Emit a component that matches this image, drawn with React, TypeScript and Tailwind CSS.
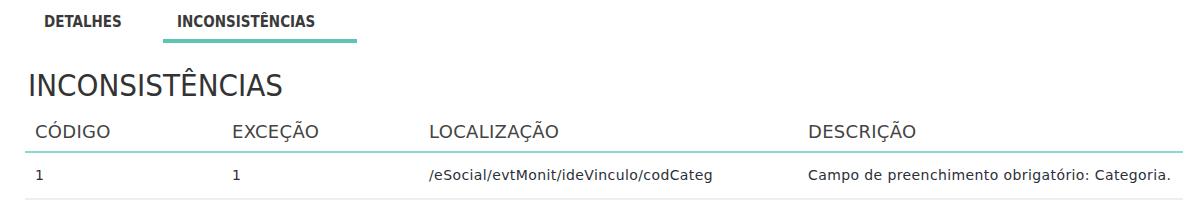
import React from "react";

const cond = { fontFamily: '"DejaVu Sans Condensed", "DejaVu Sans", sans-serif' };
const wide = { fontFamily: '"DejaVu Sans", sans-serif' };

export default function App() {
  return (
    <div className="w-[1187px] h-[218px] bg-white overflow-hidden text-[#333]" style={cond}>
      <div className="flex pl-[30px]">
        <div className="w-[133px] pl-[14px] pt-[14px] pb-[9px] border-b-4 border-transparent text-[15px] leading-[16px] font-bold text-[#3a3a3a]">
          DETALHES
        </div>
        <div className="w-[194px] pl-[14px] pt-[14px] pb-[9px] border-b-4 border-[#5ec4b3] text-[15px] leading-[16px] font-bold text-[#3a3a3a]">
          INCONSISTÊNCIAS
        </div>
      </div>
      <h1 className="mt-[24px] pl-[28px] text-[31px] leading-[36px] font-normal text-[#333]">INCONSISTÊNCIAS</h1>
      <div className="ml-[25px] mr-[4px] mt-[18px]">
        <div
          className="grid grid-cols-[197px_197px_379px_1fr] border-b-2 border-[#8dd6c9] pb-[8px] text-[18px] leading-[22px] tracking-[0.3px] text-[#444]"
          style={wide}
        >
          <div className="pl-[10px]">CÓDIGO</div>
          <div className="pl-[10px]">EXCEÇÃO</div>
          <div className="pl-[10px]">LOCALIZAÇÃO</div>
          <div className="pl-[10px]">DESCRIÇÃO</div>
        </div>
        <div
          className="grid grid-cols-[197px_197px_379px_1fr] border-b-2 border-[#eeeeee] pt-[13px] pb-[14px] text-[14px] leading-[18px] tracking-[0.4px] text-[#2b2f3a]"
          style={wide}
        >
          <div className="pl-[10px]">1</div>
          <div className="pl-[10px]">1</div>
          <div className="pl-[10px]">/eSocial/evtMonit/ideVinculo/codCateg</div>
          <div className="pl-[10px]">Campo de preenchimento obrigatório: Categoria.</div>
        </div>
      </div>
    </div>
  );
}
